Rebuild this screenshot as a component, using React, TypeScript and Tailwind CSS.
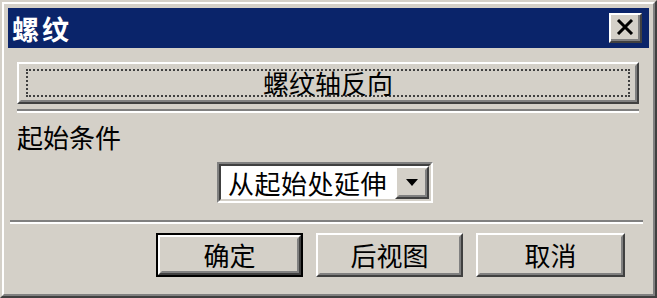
import React from "react";

const font = { fontFamily: '"Noto Sans CJK SC", "Noto Sans", sans-serif' };

function Bevel({ children, className = "" }: { children?: React.ReactNode; className?: string }) {
  return (
    <div className={"border-2 border-t-white border-l-white border-r-[#404040] border-b-[#404040] bg-[#d4d0c8] " + className}>
      <div className="w-full h-full border-2 border-t-[#d4d0c8] border-l-[#d4d0c8] border-r-[#808080] border-b-[#808080] flex items-center justify-center">
        {children}
      </div>
    </div>
  );
}

export default function App() {
  return (
    <div className="w-[657px] h-[298px] bg-[#d4d0c8]" style={font}>
      <div className="w-full h-full border-2 border-t-[#d4d0c8] border-l-[#d4d0c8] border-r-[#404040] border-b-[#404040]">
        <div className="w-full h-full border-2 border-t-white border-l-white border-r-[#808080] border-b-[#808080] p-[4px] flex flex-col">
          {/* Title bar */}
          <div className="h-[40px] bg-[#0a246a] flex items-center pl-[4px] pr-[7px] shrink-0">
            <span className="text-white font-bold text-[27px] leading-none tracking-[3px]">螺纹</span>
            <div className="ml-auto w-[33px] h-[30px] border-2 border-t-white border-l-white border-r-[#404040] border-b-[#404040] bg-[#d4d0c8]">
              <div className="w-full h-full border-r-2 border-b-2 border-[#808080] flex items-center justify-center">
                <svg width="18" height="16" viewBox="0 0 18 16">
                  <path d="M2 1 L16 15 M16 1 L2 15" stroke="#000" strokeWidth="3" />
                </svg>
              </div>
            </div>
          </div>

          {/* Main button */}
          <div className="mt-[14px] ml-[9px] mr-[10px] h-[42px] shrink-0">
            <Bevel className="w-full h-full">
              <div className="w-[calc(100%-10px)] h-[calc(100%-6px)] border-2 border-dotted border-[#404040] flex items-center justify-center">
                <span className="text-[26px] leading-none text-black">螺纹轴反向</span>
              </div>
            </Bevel>
          </div>

          {/* Separator */}
          <div className="mt-[5px] ml-[9px] mr-[10px] h-[4px] border-t-2 border-t-[#808080] border-b-2 border-b-white shrink-0" />

          {/* Label */}
          <div className="mt-[10px] ml-[9px] h-[28px] flex items-center text-[26px] leading-none text-black shrink-0">
            起始条件
          </div>

          {/* Combo box */}
          <div className="mt-[11px] ml-[209px] w-[216px] h-[41px] border-2 border-t-[#808080] border-l-[#808080] border-r-white border-b-white shrink-0">
            <div className="w-full h-full border-2 border-t-[#404040] border-l-[#404040] border-r-[#d4d0c8] border-b-[#d4d0c8] bg-white flex items-center">
              <span className="pl-[7px] text-[26px] leading-none text-black tracking-[0.5px]">从起始处延伸</span>
              <Bevel className="ml-auto w-[34px] h-full">
                <svg width="12" height="7" viewBox="0 0 12 7">
                  <path d="M0 0 L12 0 L6 7 Z" fill="#000" />
                </svg>
              </Bevel>
            </div>
          </div>

          {/* Separator */}
          <div className="mt-[17px] ml-[2px] mr-[6px] h-[4px] border-t-2 border-t-[#808080] border-b-2 border-b-white shrink-0" />

          {/* Buttons */}
          <div className="mt-[9px] flex justify-end gap-[13px] pr-[24px] shrink-0">
            <div className="w-[147px] h-[44px] border-2 border-black">
              <Bevel className="w-full h-full">
                <span className="text-[26px] leading-none text-black">确定</span>
              </Bevel>
            </div>
            <Bevel className="w-[147px] h-[44px]">
              <span className="text-[26px] leading-none text-black">后视图</span>
            </Bevel>
            <Bevel className="w-[149px] h-[44px]">
              <span className="text-[26px] leading-none text-black">取消</span>
            </Bevel>
          </div>
        </div>
      </div>
    </div>
  );
}
